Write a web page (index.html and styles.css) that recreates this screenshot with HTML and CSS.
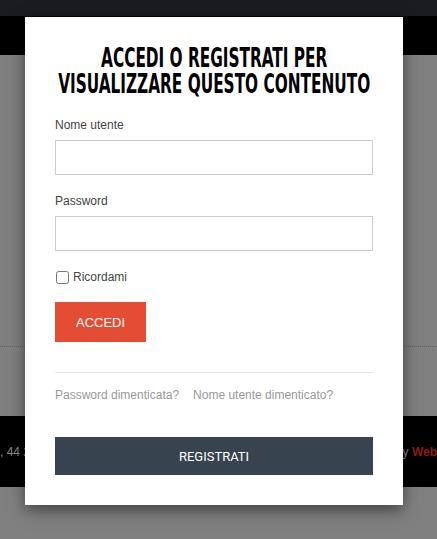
FILE: index.html
```html
<!DOCTYPE html>
<html lang="it">
<head>
    <meta charset="UTF-8">
    <meta name="viewport" content="width=device-width, initial-scale=1.0">
    <title>Accedi</title>
    <link rel="stylesheet" href="styles.css">
</head>
<body>
    <div class="page">
        <div class="topbar"></div>
        <header class="header"></header>
        <main class="content">
            <div class="article"></div>
        </main>
        <footer class="footer">
            <span class="footer-left">, 44 2</span>
            <span class="footer-right">by <a href="#">Web</a></span>
        </footer>
    </div>

    <div class="modal">
        <h2 class="modal-title"><span>ACCEDI O REGISTRATI PER<br>VISUALIZZARE QUESTO CONTENUTO</span></h2>
        <form class="login-form">
            <label for="username">Nome utente</label>
            <input type="text" id="username">
            <label for="password">Password</label>
            <input type="password" id="password">
            <div class="remember">
                <input type="checkbox" id="remember">
                <label for="remember">Ricordami</label>
            </div>
            <button type="submit" class="btn-login">ACCEDI</button>
        </form>
        <div class="links">
            <a href="#">Password dimenticata?</a>
            <a href="#">Nome utente dimenticato?</a>
        </div>
        <button class="btn-register">REGISTRATI</button>
    </div>
</body>
</html>
```

FILE: styles.css
```css
body {
    margin: 0;
    background: #808080;
    font-family: 'Liberation Sans', Arial, sans-serif;
    font-size: 12px;
    overflow: hidden;
}
.topbar {
    height: 16px;
    background: #1b1c21;
}
.header {
    height: 39px;
    background: #000;
}
.content {
    height: 361px;
}
.article {
    height: 291px;
    border-bottom: 1px dotted #626262;
}
.footer {
    height: 71px;
    background: #000;
    display: flex;
    justify-content: space-between;
    align-items: center;
    color: #8c8c8c;
    font-size: 12px;
    white-space: nowrap;
}
.footer a {
    color: #8e1d14;
    text-decoration: none;
    font-weight: bold;
}
.modal {
    position: absolute;
    top: 17px;
    left: 25px;
    width: 378px;
    box-sizing: border-box;
    padding: 28px 30px 30px;
    background: #fff;
    box-shadow: 0 5px 15px rgba(0, 0, 0, .5);
}
.modal-title {
    margin: 0 0 19px;
    display: flex;
    justify-content: center;
    font-family: 'DejaVu Sans Condensed', sans-serif;
    font-weight: bold;
    font-size: 26px;
    line-height: 26px;
    color: #000;
    text-align: center;
    white-space: nowrap;
}
.modal-title span {
    display: inline-block;
    transform: scaleX(0.655);
}
.login-form label {
    display: block;
    line-height: 18px;
    color: #444;
    margin-bottom: 6px;
}
.login-form input[type="text"],
.login-form input[type="password"] {
    display: block;
    width: 100%;
    height: 35px;
    box-sizing: border-box;
    border: 1px solid #ccc;
    margin: 0 0 17px;
    padding: 4px 8px;
}
.remember {
    display: flex;
    align-items: center;
    gap: 4px;
    line-height: 18px;
}
.remember input {
    margin: 0 0 0 1px;
    width: 13px;
    height: 13px;
}
.remember label {
    margin: 0;
}
.btn-login {
    margin-top: 16px;
    height: 40px;
    padding: 0 21px;
    border: none;
    background: #e44d34;
    color: #fff;
    font-family: 'Liberation Sans', Arial, sans-serif;
    font-size: 13px;
    cursor: pointer;
}
.links {
    margin-top: 30px;
    border-top: 1px solid #e6e6e6;
    padding-top: 13px;
    line-height: 18px;
    display: flex;
    gap: 14px;
}
.links a {
    color: #999;
    text-decoration: none;
}
.btn-register {
    display: block;
    margin-top: 33px;
    width: 100%;
    height: 38px;
    border: none;
    background: #37434f;
    color: #fff;
    font-family: Roboto, sans-serif;
    font-size: 13px;
    cursor: pointer;
}
```
